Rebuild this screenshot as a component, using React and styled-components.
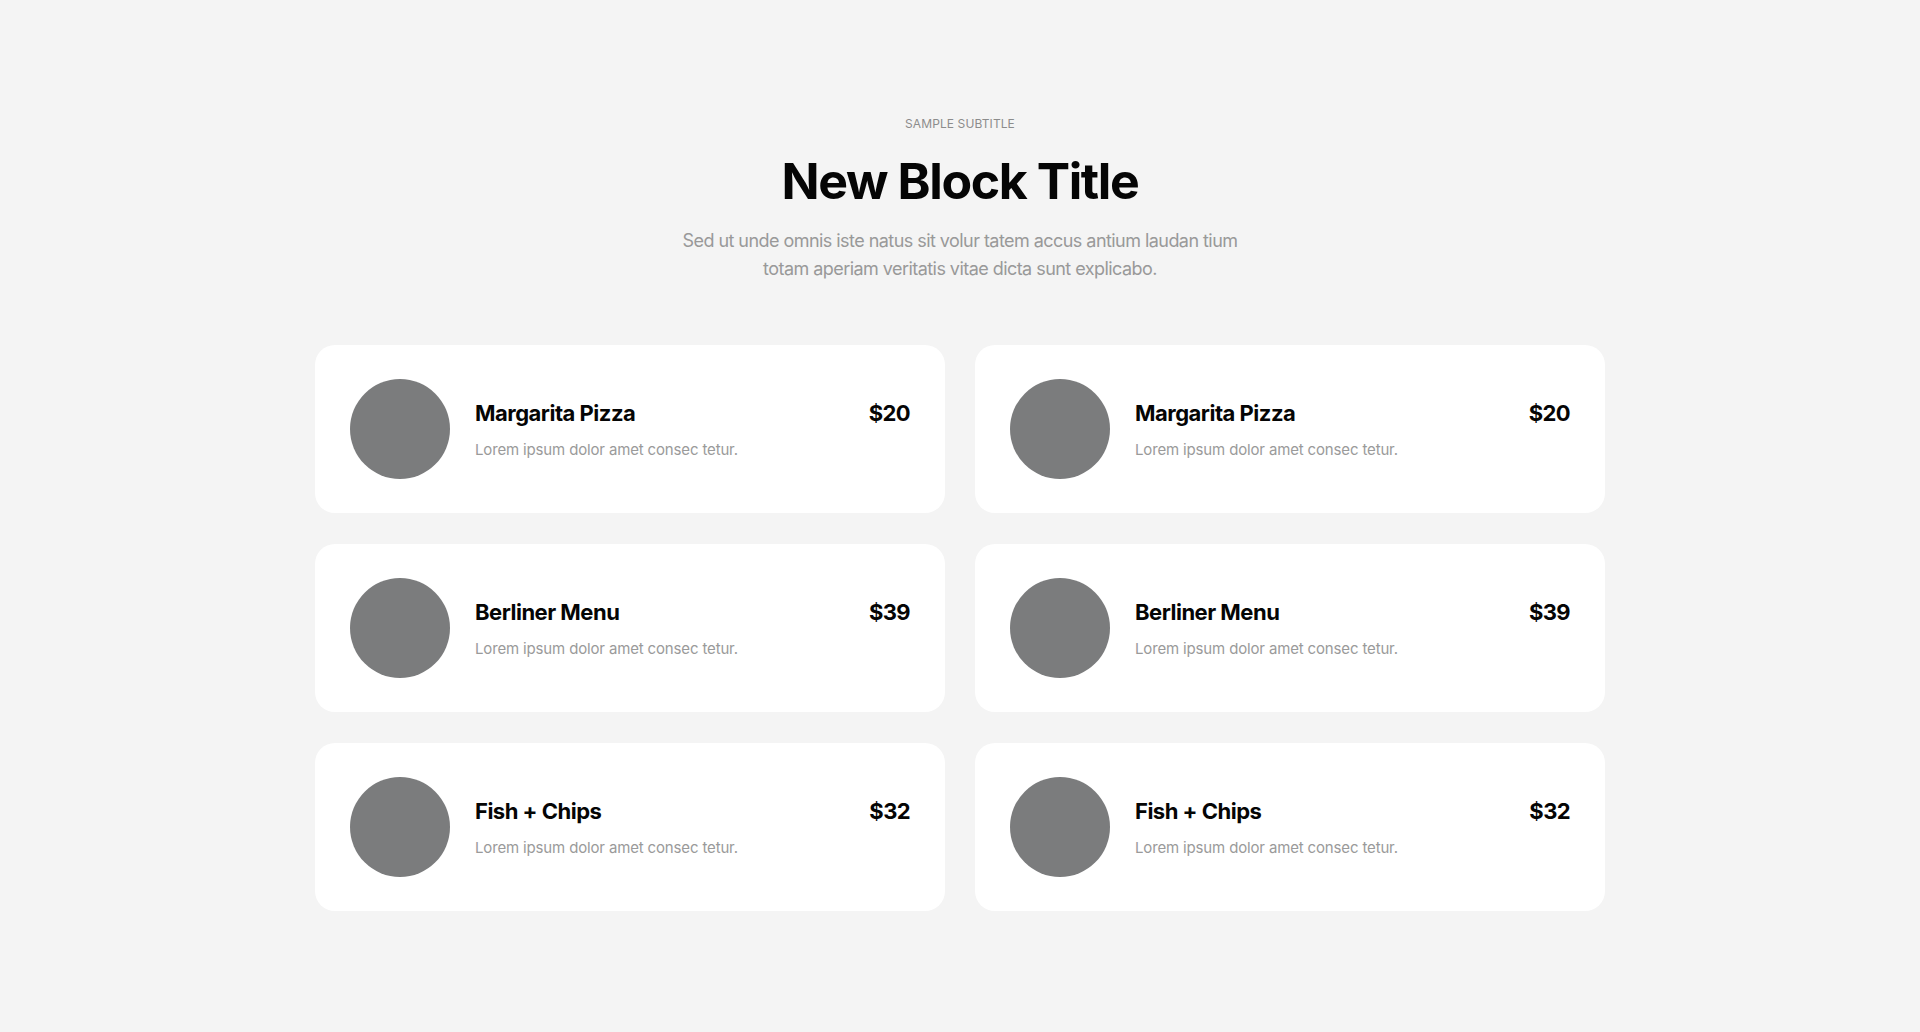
import React from "react";
import styled, { createGlobalStyle } from "styled-components";

const GlobalStyle = createGlobalStyle`
  * {
    box-sizing: border-box;
  }

  html,
  body {
    margin: 0;
    padding: 0;
    background: #f4f4f4;
    font-family: Inter, "Liberation Sans", sans-serif;
    -webkit-font-smoothing: antialiased;
  }
`;

const items = [
  { name: "Margarita Pizza", price: "$20" },
  { name: "Margarita Pizza", price: "$20" },
  { name: "Berliner Menu", price: "$39" },
  { name: "Berliner Menu", price: "$39" },
  { name: "Fish + Chips", price: "$32" },
  { name: "Fish + Chips", price: "$32" },
];

const App = () => {
  return (
    <>
      <GlobalStyle />
      <Section>
        <Header>
          <Subtitle>Sample subtitle</Subtitle>
          <Title>New Block Title</Title>
          <Lead>
            Sed ut unde omnis iste natus sit volur tatem accus antium laudan tium
            <br />
            totam aperiam veritatis vitae dicta sunt explicabo.
          </Lead>
        </Header>

        <MenuGrid>
          {items.map((item, i) => (
            <MenuCard key={i}>
              <Thumb />
              <Info>
                <InfoTop>
                  <ItemName>{item.name}</ItemName>
                  <Price>{item.price}</Price>
                </InfoTop>
                <ItemText>Lorem ipsum dolor amet consec tetur.</ItemText>
              </Info>
            </MenuCard>
          ))}
        </MenuGrid>
      </Section>
    </>
  );
};

const Section = styled.section`
  min-height: 1032px;
  padding: 116px 0 80px;
  display: flex;
  flex-direction: column;
  align-items: center;
`;

const Header = styled.div`
  display: flex;
  flex-direction: column;
  align-items: center;
  text-align: center;
`;

const Subtitle = styled.div`
  font-size: 12px;
  line-height: 16px;
  text-transform: uppercase;
  color: #8c8c8c;
  letter-spacing: 0.1px;
`;

const Title = styled.h1`
  margin: 19px 0 0;
  font-size: 50px;
  line-height: 60px;
  font-weight: 700;
  letter-spacing: -1.4px;
  color: #050505;
`;

const Lead = styled.p`
  margin: 16px 0 0;
  font-size: 18px;
  line-height: 28px;
  color: #999999;
  letter-spacing: -0.55px;
`;

const MenuGrid = styled.div`
  margin-top: 62px;
  width: 1290px;
  display: grid;
  grid-template-columns: repeat(2, 1fr);
  column-gap: 30px;
  row-gap: 31px;
`;

const MenuCard = styled.div`
  display: flex;
  align-items: flex-start;
  height: 168px;
  padding: 34px 35px 34px 35px;
  background: #ffffff;
  border-radius: 20px;
`;

const Thumb = styled.div`
  flex: 0 0 100px;
  width: 100px;
  height: 100px;
  border-radius: 50%;
  background: #7b7c7d;
`;

const Info = styled.div`
  flex: 1;
  margin-left: 25px;
  margin-top: 19px;
  display: flex;
  flex-direction: column;
  gap: 10px;
`;

const InfoTop = styled.div`
  display: flex;
  justify-content: space-between;
  align-items: baseline;
`;

const ItemName = styled.h3`
  margin: 0;
  font-size: 22px;
  line-height: 30px;
  font-weight: 700;
  letter-spacing: -0.5px;
  color: #050505;
`;

const Price = styled.span`
  font-size: 22px;
  line-height: 30px;
  font-weight: 700;
  letter-spacing: -0.6px;
  color: #050505;
`;

const ItemText = styled.p`
  margin: 0;
  font-size: 15px;
  line-height: 24px;
  color: #9a9a9a;
  letter-spacing: -0.15px;
`;

export default App;
